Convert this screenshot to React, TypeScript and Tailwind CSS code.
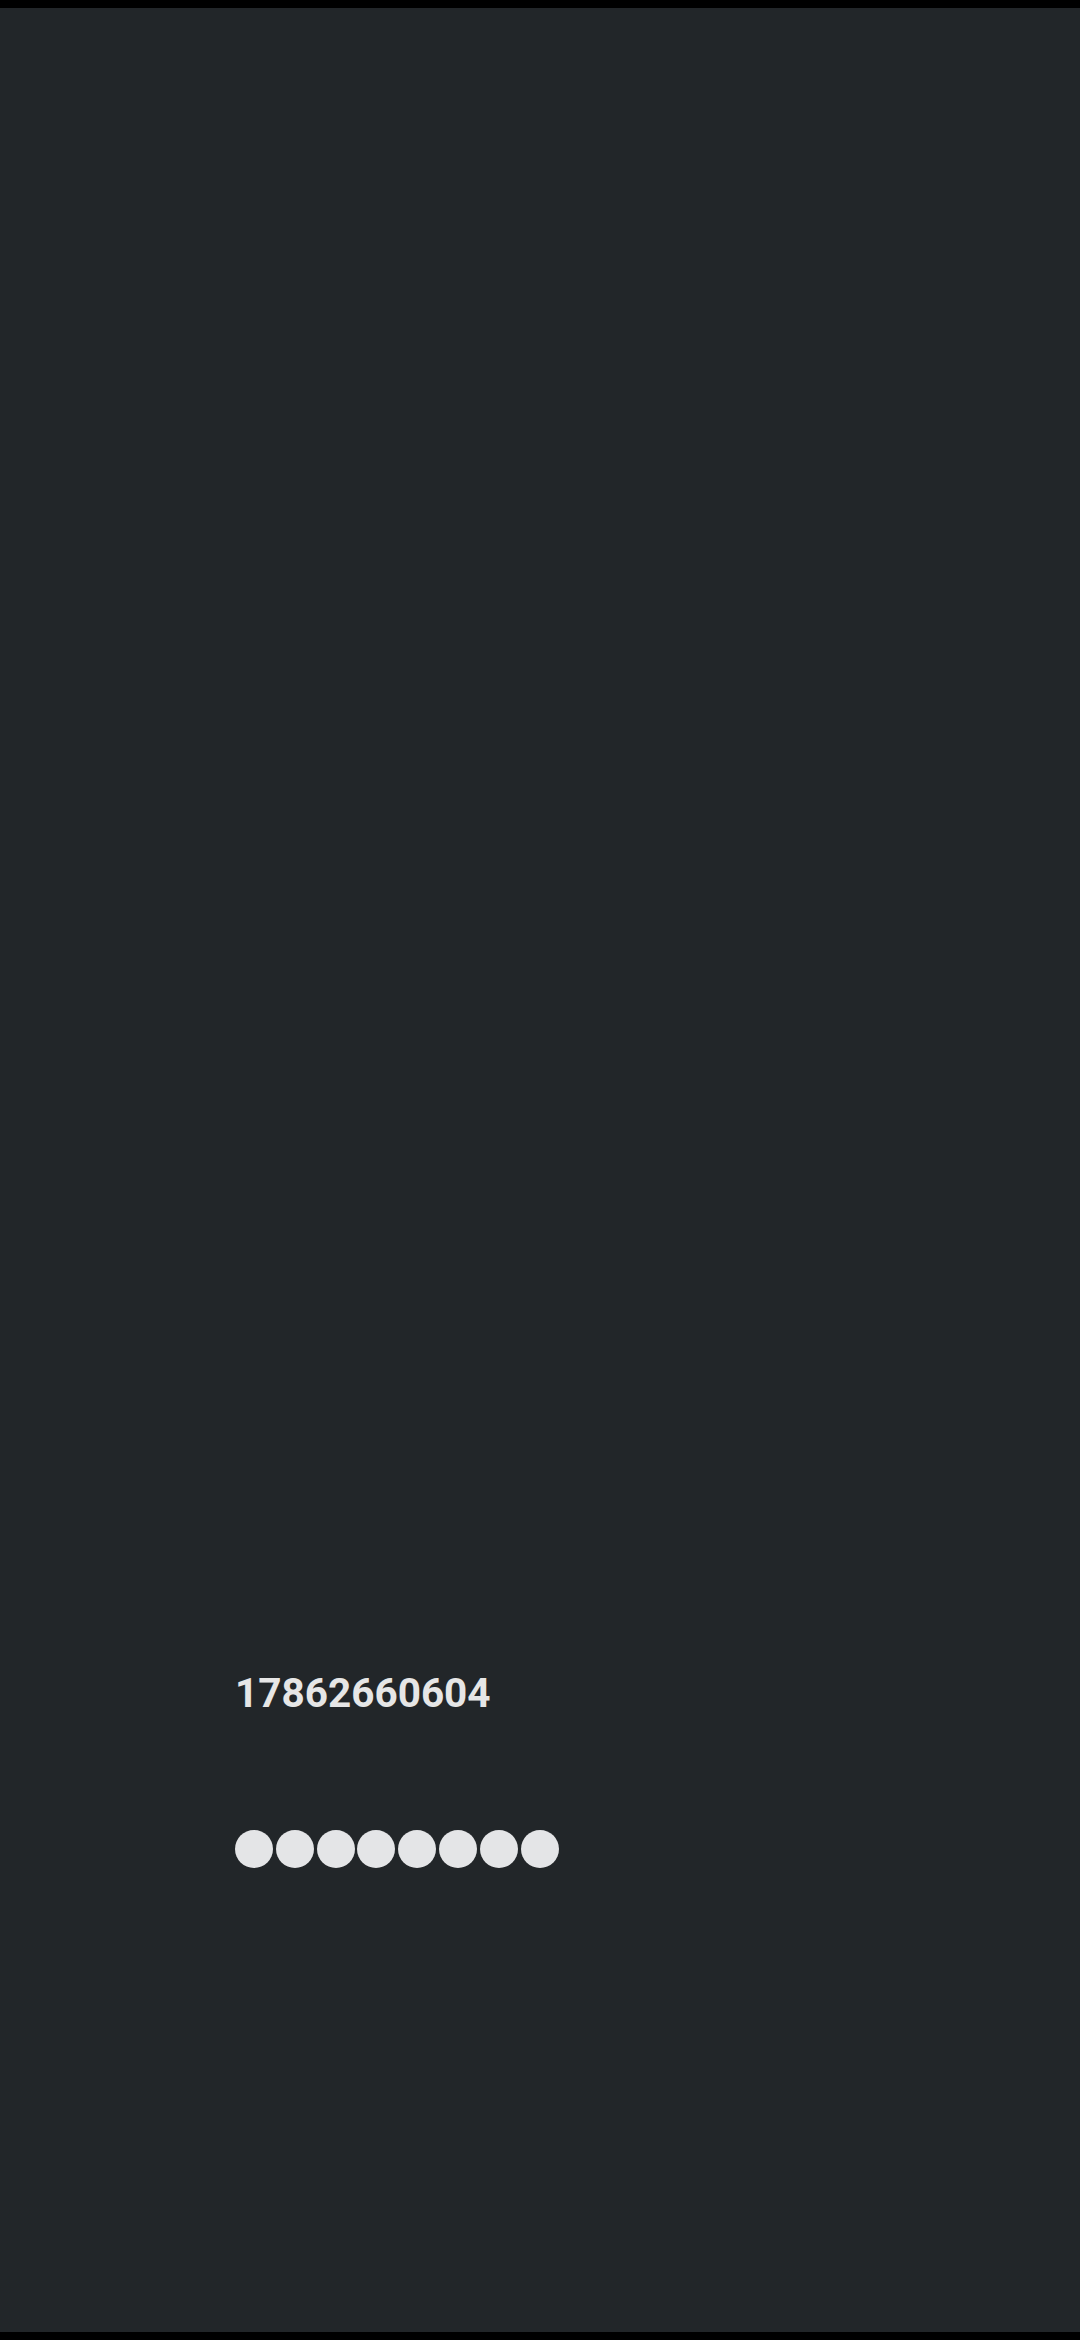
export default function App() {
  const dots = Array.from({ length: 8 })

  return (
    <div className="flex min-h-[2340px] flex-col bg-black">
      <div className="h-[8px] bg-black" />
      <div className="flex-1 bg-[#222629] pl-[235px] pt-[1665px]">
        <p
          className="text-[40.5px] font-bold leading-[41px] text-[#e6e6e6]"
          style={{ fontFamily: "Roboto, 'Noto Sans', sans-serif" }}
        >
          17862660604
        </p>
        <div className="mt-[116px] flex gap-[2.8px]">
          {dots.map((_, i) => (
            <span key={i} className="h-[38px] w-[38px] rounded-full bg-[#e4e5e7]" />
          ))}
        </div>
      </div>
      <div className="h-[8px] bg-black" />
    </div>
  )
}
